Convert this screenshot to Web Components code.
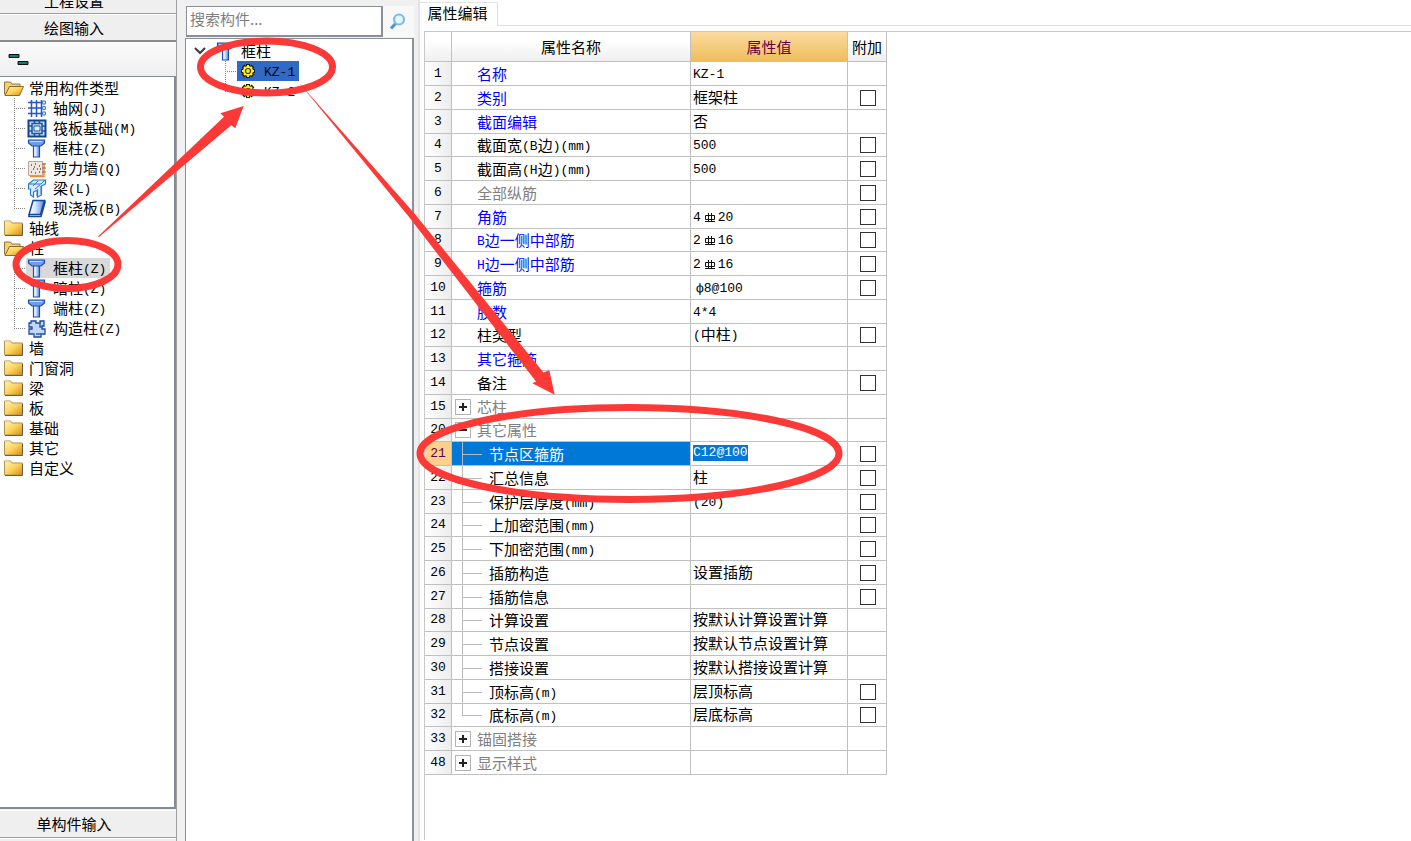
<!DOCTYPE html>
<html lang="zh-CN">
<head>
<meta charset="utf-8">
<title>属性编辑</title>
<style>
html,body{margin:0;height:100%;overflow:hidden;background:#f0f0f0}
body{font:15px/20px "Noto Sans CJK SC","Liberation Sans",sans-serif;color:#000;--mono:"Liberation Mono","Noto Sans CJK SC",monospace}
</style>
</head>
<body>
<app-shell></app-shell>
<script>
const latin = s => s.replace(/[\x21-\x7e]+/g, m => `<span class="l">${m}</span>`);
const LATIN_CSS = `.l{font-family:var(--mono);font-size:13px;line-height:14px;vertical-align:1px}`;

const GRAD = `<defs>
<linearGradient id="f" x1="0" y1="0" x2="1" y2="1"><stop offset="0" stop-color="#fff3b8"/><stop offset=".5" stop-color="#fbd35e"/><stop offset="1" stop-color="#d98a0c"/></linearGradient>
<linearGradient id="b" x1="0" y1="0" x2="1" y2="0"><stop offset="0" stop-color="#fff"/><stop offset=".4" stop-color="#d9e8ff"/><stop offset="1" stop-color="#4f86dc"/></linearGradient></defs>`;
const ICONS = {
  folder: `<path d="M1.500 5V3h6l1.500 2h10.500v12h-18z" fill="url(#f)" stroke="#b09550"/><path d="M2 4h5" stroke="#f6e6a0"/><path d="M2 17.500h17.500V6" stroke="#6d5f43" fill="none"/>`,
  open: `<path d="M1.500 16.500V4h6l1.500 2h8v3" fill="#f5cf6c" stroke="#94773a"/><path d="M6.500 8.500h14l-4 9H2z" fill="url(#f)" stroke="#8b6a28"/>`,
  grid: `<g fill="none" stroke="#2456c8" stroke-width="1.500"><path d="M4.500 2v17M9.500 2v17M14.500 2v17M1 4.500h14M1 10h14M1 15.500h14"/><g stroke-width="1.200" stroke="#4a78e0"><circle cx="17" cy="4.500" r="1.600"/><circle cx="17" cy="10" r="1.600"/><circle cx="17" cy="15.500" r="1.600"/></g></g>`,
  raft: `<path d="M1.500 2.500h17v16h-17z" fill="#c9ddf5" stroke="#12458f" stroke-width="2"/><path d="M5 5.500h10v10H5zM2 8h3M15 8h3M2 13h3M15 13h3M7.500 3v3M7.500 15v3M12.500 3v3M12.500 15v3" fill="none" stroke="#1d559f" stroke-width="1.500"/><path d="M7 8h6v5H7z" fill="#e6f1ff" stroke="#1d559f"/>`,
  column: `<path d="M6.500 7h6v12h-6z" fill="url(#b)" stroke="#1c4fae" stroke-width="1.200"/><path d="M1.500 2h16v3l-3.500 3H5L1.500 5z" fill="#6f9eea" stroke="#1c4fae" stroke-width="1.200"/><path d="M3 3.500h12" stroke="#c6dcff"/>`,
  wall: `<path d="M1.500 3.500h14v14h-14z" fill="#eee6e0" stroke="#b9a89c"/><path d="M3 18.500h14V5" fill="none" stroke="#e88a3c" stroke-width="1.500"/><path d="M15 6h4M15 10h4M15 14h4" stroke="#b05a2c"/><path d="M4 7h1M8 6h1M12 8h1M6 11h1M10 11h1M4 14h1M8 15h1M12 14h1M13 11h1M7 9h1" stroke="#5a5050" stroke-width="1.300"/>`,
  beam: `<path d="M1.500 6l5-4h12v4l-4 2v9l-4 2v-7l-4 2v5l-3-2v-6h-2z" fill="#d5eaff" stroke="#2a7ac8" stroke-width="1.200"/><path d="M2 6h12l4-4M8 11l5-4M6 8l5-5M10 12v6M14 8v8" fill="none" stroke="#2a7ac8"/>`,
  slab: `<path d="M6 2.500h11.500l-4 14H2z" fill="url(#b)" stroke="#16459c" stroke-width="1.500"/><path d="M2 16.500v2h12l4-14v-2" fill="none" stroke="#16459c" stroke-width="1.500"/>`,
  tie: `<path d="M4 3h5v2h4V3h4v5h-2v3h3v5h-4v3H7v-3H2v-5h3V9H2V5h2z" fill="#c2d8f8" stroke="#1c4aa0" stroke-width="1.300"/><path d="M13 4v5h3M9 16h5" fill="none" stroke="#355fae" stroke-width="1.500"/>`,
  gear: `<g stroke="#1e1e10" stroke-width="4"><path d="M10 3v14M3 10h14M5 5l10 10M15 5l-10 10"/></g><circle cx="10" cy="10" r="5" fill="#ffec20"/><g stroke="#ffec20" stroke-width="2"><path d="M10 4v12M4 10h12M6 6l8 8M14 6l-8 8"/></g><circle cx="10" cy="10" r="2.500" fill="#ffec20" stroke="#403c10" stroke-width="1.200"/>`,
  search: `<path d="M8 12l-5 5.500" stroke="#4f94d2" stroke-width="3"/><circle cx="11" cy="8.500" r="5" fill="#e3f5ff" stroke="#7cbcea" stroke-width="2.200"/>`,
  chevron: `<path d="M5 7l5 5 5-5" fill="none" stroke="#404040" stroke-width="2.200"/>`,
  layout: `<path d="M1 5.500h10v3H1zM10 12.500h10v3H10z" fill="#167a70" stroke="#111"/>`
};
const icon = (n, w = 20) => `<svg width="${w}" height="20" viewBox="0 0 ${w} 20" aria-hidden="true">${GRAD}${ICONS[n]}</svg>`;

class BaseElement extends HTMLElement {
  render(html) { this.attachShadow({mode: 'open'}).innerHTML = html; }
}

customElements.define('tree-item', class extends BaseElement {
  connectedCallback() {
    const a = n => this.getAttribute(n);
    this.render(`<style>
:host{display:flex;align-items:center;height:20px;line-height:20px;white-space:nowrap;padding-left:2px;box-sizing:border-box}
:host([level="1"]){padding-left:14px}
svg{display:block;flex:none}
.line{align-self:stretch;width:12px;box-sizing:border-box;background:repeating-linear-gradient(#888 0 1px,transparent 1px 2px) 0 0/1px 100% no-repeat,repeating-linear-gradient(90deg,#888 0 1px,transparent 1px 2px) 0 10px/12px 1px no-repeat}
:host([last]) .line{background-size:1px 10px,12px 1px}
.body{display:flex;align-items:center;height:20px;padding:0 4px 0 1px}
.text{margin-left:4px}
:host([level="1"]) .text{margin-left:6px}
:host([selected]) .body{background:#d9d9d9}
:host([picked]) .body{background:#316ac5}
${LATIN_CSS}</style>
${a('level') === '1' ? '<span class="line"></span>' : ''}<span class="body">${icon(a('icon'), a('level') === '1' ? 20 : 22)}<span class="text">${latin(a('label'))}</span></span>`);
  }
});

customElements.define('nav-panel', class extends BaseElement {
  connectedCallback() {
    const rows = [
      [0,'open','常用构件类型'],[1,'grid','轴网(J)'],[1,'raft','筏板基础(M)'],[1,'column','框柱(Z)'],[1,'wall','剪力墙(Q)'],[1,'beam','梁(L)'],[1,'slab','现浇板(B)','last'],
      [0,'folder','轴线'],[0,'open','柱'],[1,'column','框柱(Z)','selected'],[1,'column','暗柱(Z)'],[1,'column','端柱(Z)'],[1,'tie','构造柱(Z)','last'],
      [0,'folder','墙'],[0,'folder','门窗洞'],[0,'folder','梁'],[0,'folder','板'],[0,'folder','基础'],[0,'folder','其它'],[0,'folder','自定义']];
    this.render(`<style>
:host{display:flex;flex-direction:column;width:177px;flex:none;height:100%;box-sizing:border-box;border-right:1px solid #a0a0a0;overflow:hidden}
button{font:inherit;color:inherit;height:28px;flex:none;padding:0 28px 0 0;border:0;border-top:1px solid #fff;border-bottom:2px solid #8a8a8a;background:#efefef;line-height:24px}
button.top{margin-top:-14px;border-bottom:1px solid #a0a0a0;padding-top:2px}
button.end{border-bottom:1px solid #a0a0a0;margin-top:1px}
button.next{height:3px;border-bottom:0;padding:0}
.bar{height:34px;flex:none;padding-left:8px;display:flex;align-items:center;background:linear-gradient(#fbfbfb,#efefef)}
.tree{flex:1;min-height:0;background:#fff;border:solid #848b98;border-width:1px 2px 2px 0;padding-top:1px}
</style>
<button class="top">工程设置</button><button>绘图输入</button>
<div class="bar">${icon('layout',22)}</div>
<nav class="tree">${rows.map(r => `<tree-item level="${r[0]}" icon="${r[1]}" label="${r[2]}" ${r[3] || ''}></tree-item>`).join('')}</nav>
<button class="end">单构件输入</button><button class="next" aria-label="更多"></button>`);
  }
});

customElements.define('component-panel', class extends BaseElement {
  connectedCallback() {
    this.render(`<style>
:host{display:flex;flex-direction:column;width:229px;flex:none;height:100%;margin-left:8px}
.search{display:flex;height:38px;flex:none;padding:6px 0 1px 1px;box-sizing:border-box}
input{font:inherit;width:197px;box-sizing:border-box;border:solid #8a8f98;border-width:1px 2px 2px 1px;padding:0 3px 4px;background:#fff;outline:0}
input::placeholder{color:#808080;opacity:1}
button{border:0;background:#f8f8f8;flex:1;padding:0 2px 2px 0;display:flex;align-items:center;justify-content:center}
.tree{flex:1;background:#fff;border:solid #8b909a;border-width:1px 2px 0 1px;padding-top:2px}
.root{display:flex;align-items:center;padding-left:4px;height:20px}
.root b{font-weight:400;margin-left:5px}
.root svg+svg{margin-left:6px}
tree-item{padding-left:39px}
${LATIN_CSS}</style>
<div class="search"><input type="text" placeholder="搜索构件..." aria-label="搜索构件"><button aria-label="搜索">${icon('search')}</button></div>
<div class="tree"><div class="root">${icon('chevron')}${icon('column')}<b>框柱</b></div>
<tree-item level="1" icon="gear" label="KZ-1" picked></tree-item><tree-item level="1" icon="gear" label="KZ-2" last></tree-item></div>`);
  }
});

customElements.define('property-grid', class extends BaseElement {
  connectedCallback() {
    const bar = '<svg class="bar" width="12" height="12" viewBox="0 0 12 12" role="img" aria-label="三级钢筋"><path d="M1.500 3.500h9v4h-9zM4.500 1v9M7.500 1v9M1 9.500h10" fill="none" stroke="#111"/></svg>';
    // [number, name, value, has checkbox, tone, kind]
    const rows = [
      [1,'名称','KZ-1',0,'blue'],[2,'类别','框架柱',1,'blue'],[3,'截面编辑','否',0,'blue'],[4,'截面宽(B边)(mm)','500',1],[5,'截面高(H边)(mm)','500',1],
      [6,'全部纵筋','',1,'gray'],[7,'角筋','4#20',1,'blue'],[8,'B边一侧中部筋','2#16',1,'blue'],[9,'H边一侧中部筋','2#16',1,'blue'],[10,'箍筋','ф8@100',1,'blue'],
      [11,'肢数','4*4',0,'blue'],[12,'柱类型','(中柱)',1],[13,'其它箍筋','',0,'blue'],[14,'备注','',1],[15,'芯柱','',0,'gray','plus'],[20,'其它属性','',0,'gray','minus'],
      [21,'节点区箍筋','C12@100',1,'','child active'],[22,'汇总信息','柱',1,'','child'],[23,'保护层厚度(mm)','(20)',1,'','child'],[24,'上加密范围(mm)','',1,'','child'],
      [25,'下加密范围(mm)','',1,'','child'],[26,'插筋构造','设置插筋',1,'','child'],[27,'插筋信息','',1,'','child'],[28,'计算设置','按默认计算设置计算',0,'','child'],
      [29,'节点设置','按默认节点设置计算',0,'','child'],[30,'搭接设置','按默认搭接设置计算',0,'','child'],[31,'顶标高(m)','层顶标高',1,'','child'],[32,'底标高(m)','层底标高',1,'','child last'],
      [33,'锚固搭接','',0,'gray','plus'],[48,'显示样式','',0,'gray','plus']];
    const value = r => {
      if ((r[5] || '').includes('active')) return `<input class="edit" type="text" value="${r[2]}" aria-label="${r[1]}">`;
      if (r[2][0] === 'ф') return `<span class="l phi">${r[2]}</span>`;
      return r[2].split('#').map(latin).join(bar);
    };
    const name = r => {
      const k = r[5] || '';
      if (k === 'plus' || k === 'minus') return `<button class="tog ${k}" aria-label="${r[1]}"></button>${r[1]}`;
      return (k ? '<i class="twig"></i>' : '') + `<span>${latin(r[1])}</span>`;
    };
    this.render(`<style>
:host{display:block;flex:1;min-width:0;background:#fff;border-left:2px solid #e3e3e3;margin-left:4px;height:100%}
.tabs{display:flex;border-bottom:1px solid #e0e0e0;padding-top:2px;box-sizing:border-box;height:26px}
.tabs button{font:inherit;color:inherit;border:0;border-right:1px solid #dcdcdc;background:#fff;width:78px;height:24px;padding:0 2px 4px 0;white-space:nowrap;border-top:1px solid #e3e3e3}
.pane{margin:5px 0 0 4px;border:solid #c8c8cc;border-width:1px 0 0 1px;height:calc(100% - 32px);box-sizing:border-box}
table{border-collapse:separate;border-spacing:0;table-layout:fixed;width:462px}
th,td{padding:0;border:solid #c0c0c0;border-width:0 1px 1px 0;font-weight:400;text-align:left;white-space:nowrap;overflow:hidden;line-height:18px;box-sizing:border-box}
thead th{height:30px;text-align:center;background:linear-gradient(#fff 30%,#efefef)}
thead th.on{background:linear-gradient(#fadba0,#f0bd5c);color:#660044}
tbody tr{height:24px}
tbody tr:nth-child(4n){height:23px}
tbody th{text-align:center;font:13px/18px var(--mono);background:linear-gradient(90deg,#fff,#ececec)}
td:nth-child(3){padding:0 0 2px 2px}
td:nth-child(4){text-align:center;padding-left:1px}
.name{display:flex;align-items:center;height:22px;padding-left:25px}
.blue{color:#00f}.gray{color:#808080}
.plus .name,.minus .name{padding-left:3px}
.child .name{padding-left:10px}
.twig{width:20px;margin:-1px 7px -1px 0;height:24px;border-left:1px solid #bbb;background:linear-gradient(#bbb,#bbb) 0 12px/20px 1px no-repeat;box-sizing:border-box}
.last .twig{height:13px;align-self:flex-start}
.tog{width:16px;height:16px;margin-right:6px;padding:0;flex:none;border:1px solid #b4b4b4;background:linear-gradient(#222,#222) center/8px 2px no-repeat,#fff}
.plus .tog{background:linear-gradient(#222,#222) center/8px 2px no-repeat,linear-gradient(#222,#222) center/2px 8px no-repeat,#fff}
tbody .active th{background:#ffd08a;color:#660044}
.active td:nth-child(2){background:#0078d7;color:#fff}
.edit{display:block;width:55px;height:16px;border:0;padding:0;background:#0078d7;color:#fff;font:13px/16px var(--mono);outline:0}
input[type=checkbox]{appearance:none;display:block;margin:0 auto;width:16px;height:16px;border:1px solid #333;background:#fff}
.bar{margin:0 2px 0 3px;vertical-align:-2px}
.phi{padding-left:3px}
${LATIN_CSS}</style>
<div class="tabs"><button>属性编辑</button></div>
<div class="pane"><table><colgroup><col style="width:27px"><col style="width:239px"><col style="width:157px"><col style="width:39px"></colgroup>
<thead><tr><th></th><th>属性名称</th><th class="on">属性值</th><th>附加</th></tr></thead>
<tbody>${rows.map(r => `<tr class="${r[5] || ''}"><th>${r[0]}</th><td class="${r[4] || ''}"><div class="name">${name(r)}</div></td><td>${value(r)}</td><td>${r[3] ? `<input type="checkbox" aria-label="附加 ${r[1]}">` : ''}</td></tr>`).join('')}</tbody></table></div>`);
  }
});

customElements.define('guide-marks', class extends BaseElement {
  connectedCallback() {
    this.render(`<style>:host{position:absolute;inset:0;pointer-events:none;overflow:hidden}svg{display:block}</style>
<svg width="900" height="520" viewBox="0 0 900 520" aria-hidden="true"><g fill="none" stroke="#fb3a38" stroke-width="7">
<ellipse cx="266.500" cy="67" rx="66" ry="26"/><ellipse cx="67" cy="264.500" rx="51" ry="24"/><ellipse cx="629.500" cy="453.500" rx="209.500" ry="46"/></g>
<g fill="#fb3a38"><path d="M98 236.500L224 116.700L220.300 113.300L243.700 106L235.300 128.300L231.300 125.300L99 237z"/>
<path d="M298.500 82L414 213L543.500 372.500L549.300 370.300L554.700 394.700L532.300 383.300L536 381.500L409 217z"/></g></svg>`);
  }
});

customElements.define('app-shell', class extends BaseElement {
  connectedCallback() {
    this.render(`<style>:host{display:flex;height:100vh;position:relative;overflow:hidden;background:#f0f0f0}</style>
<nav-panel></nav-panel><component-panel></component-panel><property-grid></property-grid><guide-marks></guide-marks>`);
  }
});
</script>
</body>
</html>
